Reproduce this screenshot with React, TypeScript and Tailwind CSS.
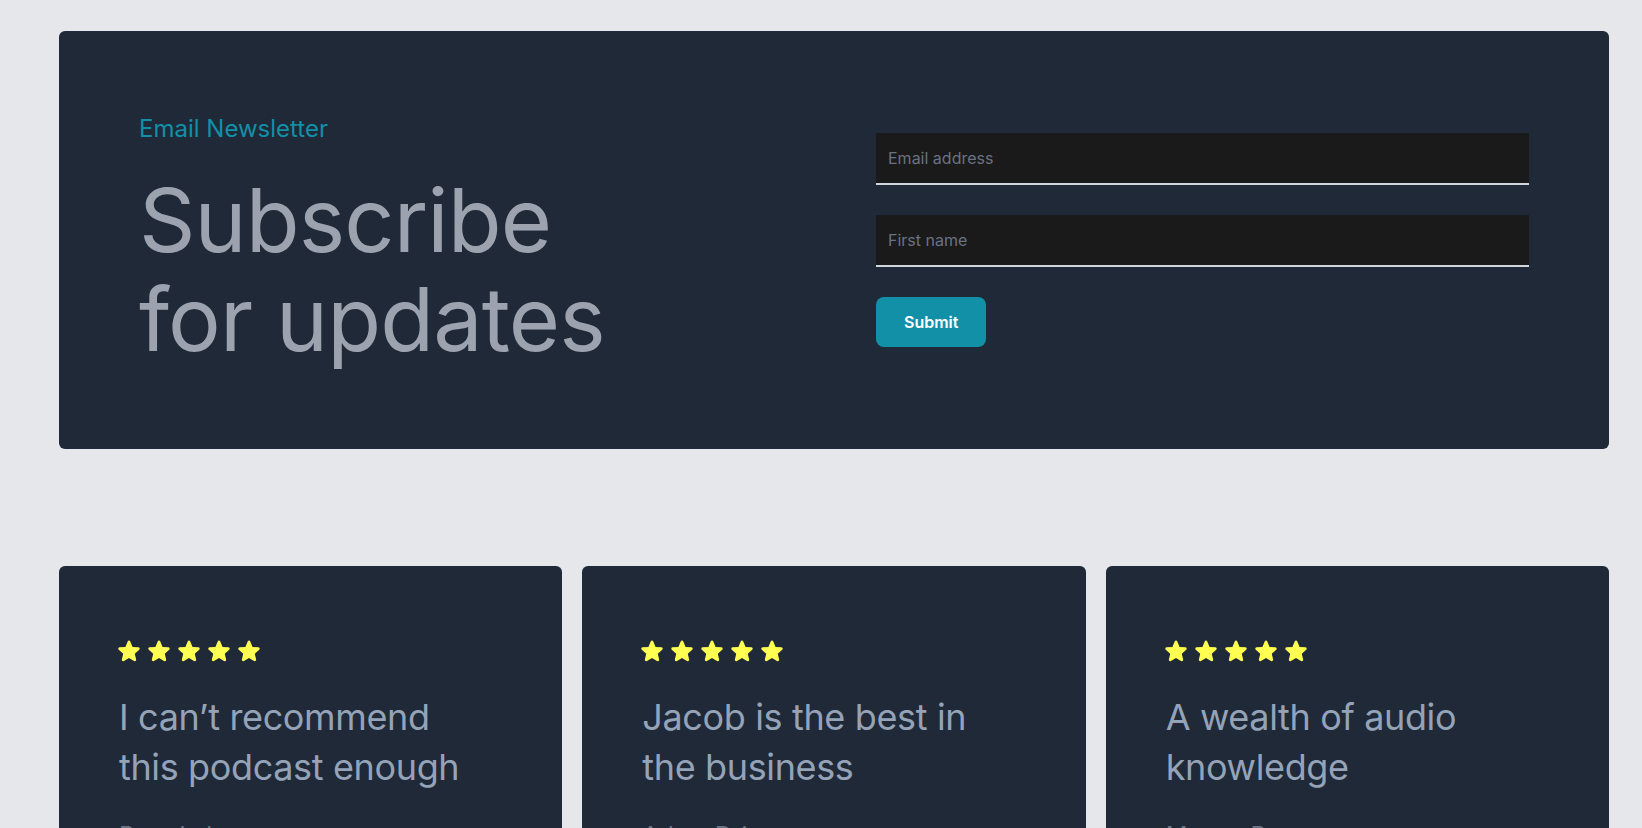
import React from 'react'

const font = { fontFamily: 'Inter, "Noto Sans", sans-serif' }

const reviews = [
  { quote: 'I can’t recommend this podcast enough', name: 'Brett Lake' },
  { quote: 'Jacob is the best in the business', name: 'Adam Driver' },
  { quote: 'A wealth of audio knowledge', name: 'Megan Brown' },
]

const Star = () => (
  <svg viewBox="0 0 24 24" className="w-[26px] h-[26px]" fill="#ffff52">
    <path
      fillRule="evenodd"
      d="M10.788 3.21c.448-1.077 1.976-1.077 2.424 0l2.082 5.006 5.404.434c1.164.093 1.636 1.545.749 2.305l-4.117 3.527 1.257 5.273c.271 1.136-.964 2.033-1.96 1.425L12 18.354 7.373 21.18c-.996.608-2.231-.29-1.96-1.425l1.257-5.273-4.117-3.527c-.887-.76-.415-2.212.749-2.305l5.404-.434 2.082-5.005Z"
    />
  </svg>
)

const Newsletter = () => (
  <section className="flex items-center rounded-md bg-[#1f2937] pl-20 pr-[80px] py-20">
    <div className="flex-1">
      <p className="pt-[2px] text-2xl leading-8 text-[#1190a8]">Email Newsletter</p>
      <h2 className="mt-[26px] text-[88px] leading-[99px] tracking-[-0.01em] text-[#9ca3af]">
        Subscribe
        <br />
        for updates
      </h2>
    </div>

    <form className="flex w-[653px] flex-col items-start gap-[30px]" onSubmit={e => e.preventDefault()}>
      <input
        type="email"
        placeholder="Email address"
        className="h-[52px] w-full border-b-2 border-gray-300 bg-[#1a1a1a] px-3 text-base text-gray-200 placeholder:text-gray-500 outline-none"
      />
      <input
        type="text"
        placeholder="First name"
        className="h-[52px] w-full border-b-2 border-gray-300 bg-[#1a1a1a] px-3 text-base text-gray-200 placeholder:text-gray-500 outline-none"
      />
      <button type="submit" className="h-[50px] rounded-lg bg-[#1190a8] px-7 text-base font-semibold text-white">
        Submit
      </button>
    </form>
  </section>
)

export default function App() {
  return (
    <div className="min-h-screen bg-[#e5e7eb] pt-[31px] pl-[59px] pr-[33px] pb-10" style={font}>
      <Newsletter />

      <div className="mt-[117px] grid grid-cols-3 gap-5">
        {reviews.map(r => (
          <div key={r.name} className="rounded-md bg-[#1f2937] px-[57px] pt-[72px] pb-16">
            <div className="flex gap-[4px]">
              {[0, 1, 2, 3, 4].map(i => (
                <Star key={i} />
              ))}
            </div>
            <p className="mt-[29px] max-w-[360px] pl-[3px] text-4xl leading-[49.5px] tracking-[-0.01em] text-[#94a3b8]">
              {r.quote}
            </p>
            <p className="mt-[28px] pl-[3px] text-2xl leading-8 text-gray-500">{r.name}</p>
          </div>
        ))}
      </div>
    </div>
  )
}
